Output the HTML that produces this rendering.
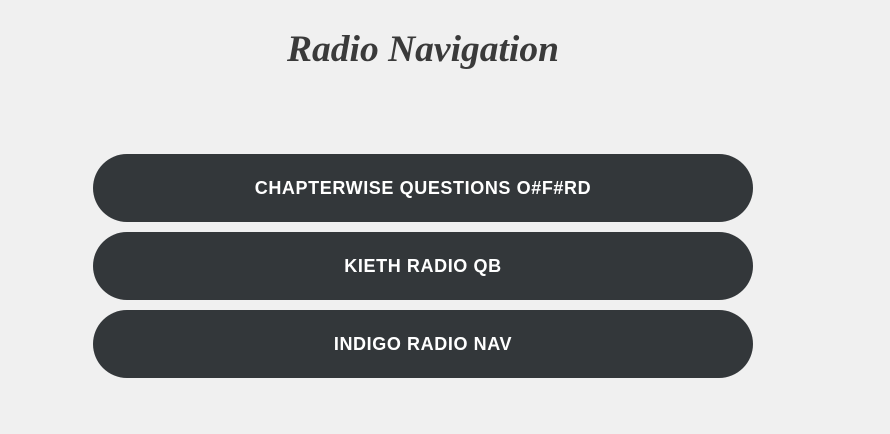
<!DOCTYPE html>
<html><head><style>
html,body{margin:0;padding:0;background:#f0f0f0;width:890px;height:434px;overflow:hidden}
h1{position:absolute;left:0;width:846px;top:27px;margin:0;text-align:center;font-family:"Liberation Serif",serif;font-style:italic;font-weight:bold;font-size:37.5px;color:#3a3a3a;line-height:46px}
.b{position:absolute;left:93px;width:660px;height:68px;border-radius:34px;background:#33373a;color:#fff;font-family:"Liberation Sans",sans-serif;font-size:18px;font-weight:bold;text-align:center;line-height:68px;letter-spacing:0.6px}
</style></head><body>
<h1>Radio Navigation</h1>
<div class="b" style="top:154px">CHAPTERWISE QUESTIONS O#F#RD</div>
<div class="b" style="top:232px">KIETH RADIO QB</div>
<div class="b" style="top:310px">INDIGO RADIO NAV</div>
</body></html>
